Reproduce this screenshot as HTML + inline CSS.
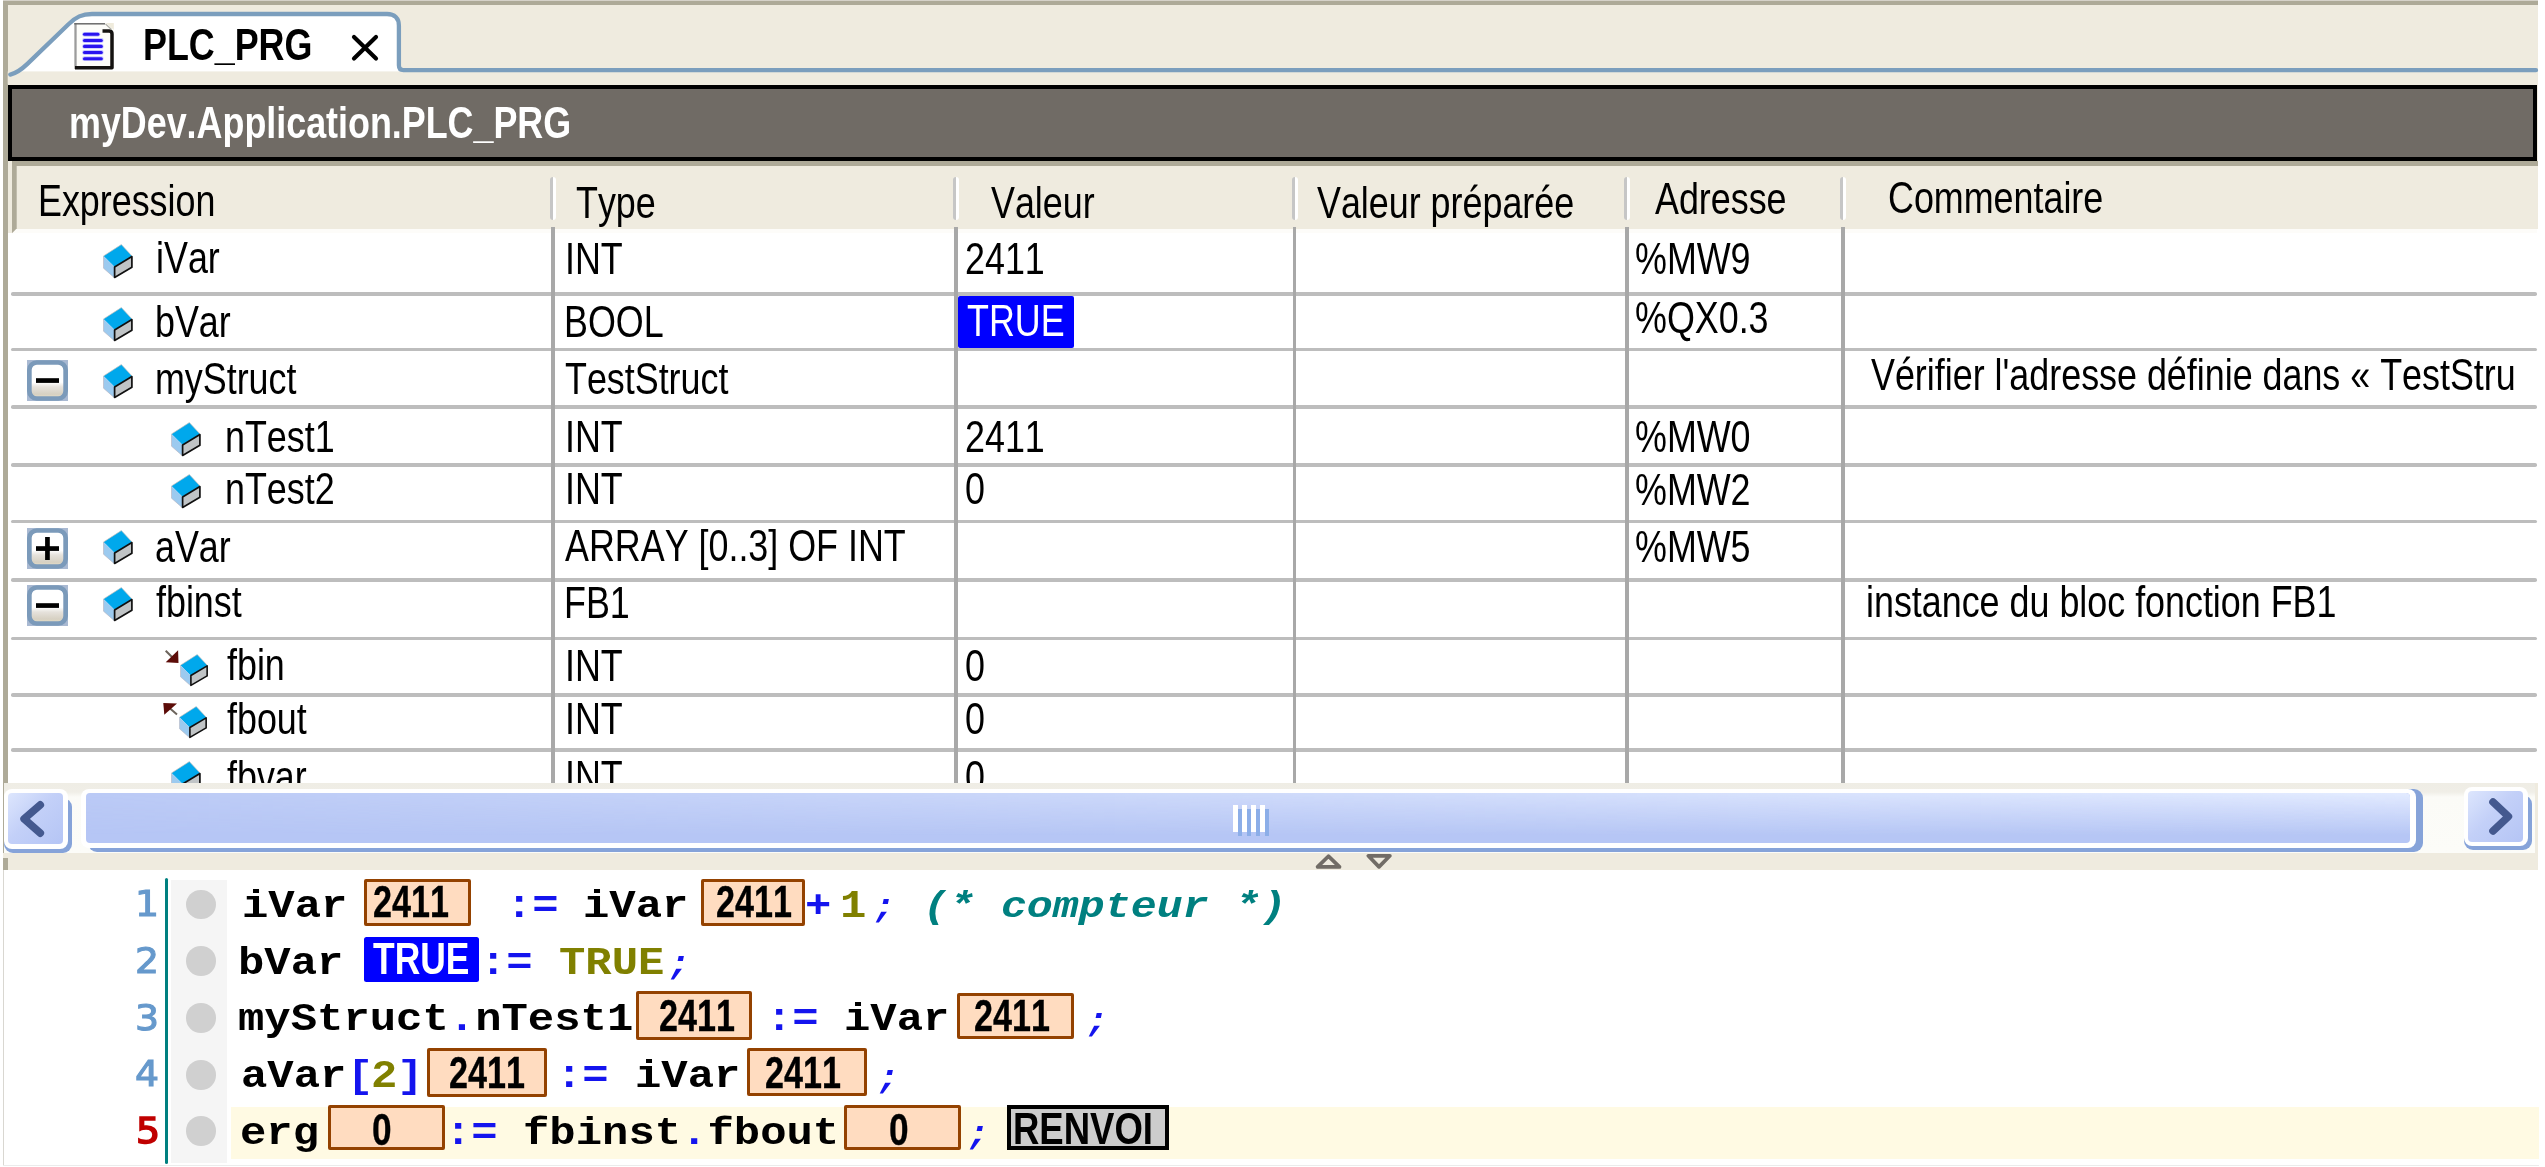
<!DOCTYPE html><html><head><meta charset="utf-8"><title>PLC_PRG</title><style>
*{box-sizing:border-box;margin:0;padding:0}
html,body{width:2545px;height:1167px;overflow:hidden;background:#fff}
body{position:relative;font-family:"Liberation Sans",sans-serif;color:#000}
.a{position:absolute}
.n{position:absolute;font-kerning:none;font-size:44px;line-height:44px;white-space:nowrap;transform:scaleX(.815);transform-origin:0 0}
.b{font-weight:bold}
.c{position:absolute;font-family:"Liberation Mono",monospace;font-weight:bold;font-size:43.4px;line-height:44px;white-space:pre;transform:scale(1.012,.88);transform-origin:0 0}
.hl{position:absolute;left:10.5px;width:2526px;height:3.7px;background:#bdbdbd;border-radius:1.8px}
.vl{position:absolute;top:227px;height:556px;width:3.5px;background:#a8a8a8}
.hs{position:absolute;top:177px;height:43px;width:6px;border-radius:3px;background:linear-gradient(90deg,#c6c6c6 0,#c6c6c6 45%,#fff 55%,#fff 100%)}
.vb{position:absolute;height:46.5px;border:3.8px solid #944200;background:#ffdcc0;border-radius:2px}
.ln{position:absolute;transform:scaleX(1.05);transform-origin:100% 0;font-family:"DejaVu Sans",sans-serif;font-size:36px;line-height:40px;color:#6699cc;width:60px;text-align:right;left:99px}
.dot{position:absolute;left:186px;width:30px;height:30px;border-radius:50%;background:#d0d0d0}
</style></head><body>
<div class="a" style="left:3px;top:0;width:2534.5px;height:870px;background:#efebdf"></div>
<div class="a" style="left:3px;top:0;width:2534.5px;height:1px;background:#d6d2c9"></div>
<div class="a" style="left:3px;top:1px;width:2534.5px;height:4px;background:#aeaa98"></div>
<div class="a" style="left:3px;top:1px;width:4.7px;height:869px;background:#aeaa98"></div>
<svg class="a" style="left:0;top:0" width="2545" height="90" viewBox="0 0 2545 90">
<path d="M10.3 74.6 C17 73 21 70 27.4 63.9 L68.5 24.2 C76 17 82 14 92 14 L387 14 C394.5 14 398.9 18.5 398.9 25.5 L398.9 65.3 C398.9 68.5 400.5 70.2 403.5 70.2 L404 73 L10 76 Z" fill="#fff" stroke="none"/>
<rect x="7.7" y="71.4" width="2530" height="13" fill="#efebdf"/>
<path d="M2536 70.2 L403.5 70.2 C400.5 70.2 398.9 68.5 398.9 65.3 L398.9 25.5 C398.9 18.5 394.5 14 387 14 L92 14 C82 14 76 17 68.5 24.2 L27.4 63.9 C21 70 17 73 10.3 74.6" fill="none" stroke="#7b9ebd" stroke-width="4.3" stroke-linecap="round" stroke-linejoin="round"/>
</svg>
<svg class="a" style="left:73px;top:22px" width="43" height="49" viewBox="0 0 43 49">
<path d="M1.5 1 L33 1 L40.8 8 L40.8 47.8 L1.5 47.8 Z" fill="#fdfdfa"/>
<path d="M33 1 L40.8 1 L40.8 8 Z" fill="#efebdc"/>
<path d="M2.5 1 L2.5 47" fill="none" stroke="#9c9c9c" stroke-width="2.3"/>
<path d="M1.3 1.8 L32 1.8" fill="none" stroke="#6a6a6a" stroke-width="1.5"/>
<path d="M29.5 8.9 L36 8.9 Q39 8.9 39 12 L39 45.7 L2 45.7" fill="none" stroke="#141210" stroke-width="3.5" stroke-linejoin="round"/>
<path d="M32.5 2 L38.5 7.5" fill="none" stroke="#b0b0a8" stroke-width="1.2"/>
<g stroke="#c6c6ff" stroke-width="4.8" stroke-linecap="round"><path d="M11.5 12.3H24.9"/><path d="M11.5 18.5H28.3"/><path d="M11.5 24.4H28.3"/><path d="M11.5 30.5H28.3"/><path d="M11.5 36.7H28.3"/></g>
<g stroke="#2a14f0" stroke-width="3.1" stroke-linecap="round"><path d="M11.5 12.3H24.9"/><path d="M11.5 18.5H28.3"/><path d="M11.5 24.4H28.3"/><path d="M11.5 30.5H28.3"/><path d="M11.5 36.7H28.3"/></g>
</svg>
<span class="n b" style="left:142.9px;top:23.3px;">PLC_PRG</span>
<svg class="a" style="left:346px;top:28px" width="40" height="40" viewBox="0 0 40 40"><path d="M8 9 L30 30.5 M30 9 L8 30.5" stroke="#000" stroke-width="4.2" stroke-linecap="round" fill="none"/></svg>
<div class="a" style="left:8px;top:85px;width:2528.5px;height:76px;background:#706b65;border:4.2px solid #000"></div>
<div class="a" style="left:12px;top:161px;width:2525.5px;height:5px;background:#aeaa98"></div>
<span class="n b" style="left:69.2px;top:100.6px;color:#fff;">myDev.Application.PLC_PRG</span>
<div class="a" style="left:7.7px;top:229.3px;width:2537.3px;height:553.7px;background:#fff"></div>
<div class="a" style="left:7.7px;top:229.3px;width:2529.8px;height:3.5px;background:#fdfcf9"></div>
<div class="a" style="left:3px;top:229.3px;width:4.7px;height:553.7px;background:#aeaa98"></div>
<div class="a" style="left:7.7px;top:229px;width:4.4px;height:4.3px;background:#efebdf"></div>
<svg class="a" style="left:12px;top:161px" width="6" height="74" viewBox="0 0 6 74"><path d="M0 0 L4.7 0 L4.7 67.5 L0 72.2 Z" fill="#aeaa98"/></svg>
<div class="hl" style="top:292.1px"></div>
<div class="hl" style="top:347.7px"></div>
<div class="hl" style="top:405.2px"></div>
<div class="hl" style="top:463.2px"></div>
<div class="hl" style="top:519.8px"></div>
<div class="hl" style="top:578.2px"></div>
<div class="hl" style="top:636.6px"></div>
<div class="hl" style="top:693px"></div>
<div class="hl" style="top:748.1px"></div>
<div class="vl" style="left:551.2px"></div>
<div class="hs" style="left:549.8px"></div>
<div class="vl" style="left:954.1px"></div>
<div class="hs" style="left:952.7px"></div>
<div class="vl" style="left:1292.9px"></div>
<div class="hs" style="left:1291.5px"></div>
<div class="vl" style="left:1625.1px"></div>
<div class="hs" style="left:1623.7px"></div>
<div class="vl" style="left:1841.3px"></div>
<div class="hs" style="left:1839.9px"></div>
<span class="n " style="left:37.9px;top:179.1px;">Expression</span>
<span class="n " style="left:575.7px;top:181.2px;">Type</span>
<span class="n " style="left:990.8px;top:181.2px;">Valeur</span>
<span class="n " style="left:1317.1px;top:180.7px;">Valeur préparée</span>
<span class="n " style="left:1654.9px;top:177.3px;">Adresse</span>
<span class="n " style="left:1888.4px;top:175.9px;">Commentaire</span>
<svg class="a" style="left:103px;top:243.7px" width="31" height="37" viewBox="0 0 31 37"><path d="M0.5 12 L18.35 0.6 L29.3 12.3 L11.4 22.8 Z" fill="#00a8ec"/><path d="M0.5 12 L11.4 22.8 L11.4 33.8 L0.5 24.2 Z" fill="#9ccaef"/><path d="M0.5 12 L18.35 0.6 L29.3 12.3" fill="none" stroke="#cdbfb8" stroke-width="0.9" opacity=".75"/><path d="M0.5 12 L0.5 24.2 L11.4 33.8" fill="none" stroke="#b8b8c4" stroke-width="0.9" opacity=".75"/><path d="M11.6 22.9 L28.9 12.6 L28.9 23.3 L11.6 33.4 Z" fill="#c0c4c6" stroke="#101010" stroke-width="1.7" stroke-linejoin="round"/></svg>
<span class="n " style="left:155.5px;top:236.2px;">iVar</span>
<svg class="a" style="left:103px;top:306.5px" width="31" height="37" viewBox="0 0 31 37"><path d="M0.5 12 L18.35 0.6 L29.3 12.3 L11.4 22.8 Z" fill="#00a8ec"/><path d="M0.5 12 L11.4 22.8 L11.4 33.8 L0.5 24.2 Z" fill="#9ccaef"/><path d="M0.5 12 L18.35 0.6 L29.3 12.3" fill="none" stroke="#cdbfb8" stroke-width="0.9" opacity=".75"/><path d="M0.5 12 L0.5 24.2 L11.4 33.8" fill="none" stroke="#b8b8c4" stroke-width="0.9" opacity=".75"/><path d="M11.6 22.9 L28.9 12.6 L28.9 23.3 L11.6 33.4 Z" fill="#c0c4c6" stroke="#101010" stroke-width="1.7" stroke-linejoin="round"/></svg>
<span class="n " style="left:155.1px;top:299.5px;">bVar</span>
<svg class="a" style="left:103px;top:363.5px" width="31" height="37" viewBox="0 0 31 37"><path d="M0.5 12 L18.35 0.6 L29.3 12.3 L11.4 22.8 Z" fill="#00a8ec"/><path d="M0.5 12 L11.4 22.8 L11.4 33.8 L0.5 24.2 Z" fill="#9ccaef"/><path d="M0.5 12 L18.35 0.6 L29.3 12.3" fill="none" stroke="#cdbfb8" stroke-width="0.9" opacity=".75"/><path d="M0.5 12 L0.5 24.2 L11.4 33.8" fill="none" stroke="#b8b8c4" stroke-width="0.9" opacity=".75"/><path d="M11.6 22.9 L28.9 12.6 L28.9 23.3 L11.6 33.4 Z" fill="#c0c4c6" stroke="#101010" stroke-width="1.7" stroke-linejoin="round"/></svg>
<span class="n " style="left:155.1px;top:357.1px;">myStruct</span>
<svg class="a" style="left:171px;top:421.8px" width="31" height="37" viewBox="0 0 31 37"><path d="M0.5 12 L18.35 0.6 L29.3 12.3 L11.4 22.8 Z" fill="#00a8ec"/><path d="M0.5 12 L11.4 22.8 L11.4 33.8 L0.5 24.2 Z" fill="#9ccaef"/><path d="M0.5 12 L18.35 0.6 L29.3 12.3" fill="none" stroke="#cdbfb8" stroke-width="0.9" opacity=".75"/><path d="M0.5 12 L0.5 24.2 L11.4 33.8" fill="none" stroke="#b8b8c4" stroke-width="0.9" opacity=".75"/><path d="M11.6 22.9 L28.9 12.6 L28.9 23.3 L11.6 33.4 Z" fill="#c0c4c6" stroke="#101010" stroke-width="1.7" stroke-linejoin="round"/></svg>
<span class="n " style="left:225.1px;top:414.5px;">nTest1</span>
<svg class="a" style="left:171px;top:474px" width="31" height="37" viewBox="0 0 31 37"><path d="M0.5 12 L18.35 0.6 L29.3 12.3 L11.4 22.8 Z" fill="#00a8ec"/><path d="M0.5 12 L11.4 22.8 L11.4 33.8 L0.5 24.2 Z" fill="#9ccaef"/><path d="M0.5 12 L18.35 0.6 L29.3 12.3" fill="none" stroke="#cdbfb8" stroke-width="0.9" opacity=".75"/><path d="M0.5 12 L0.5 24.2 L11.4 33.8" fill="none" stroke="#b8b8c4" stroke-width="0.9" opacity=".75"/><path d="M11.6 22.9 L28.9 12.6 L28.9 23.3 L11.6 33.4 Z" fill="#c0c4c6" stroke="#101010" stroke-width="1.7" stroke-linejoin="round"/></svg>
<span class="n " style="left:225.1px;top:467.2px;">nTest2</span>
<svg class="a" style="left:103px;top:529.5px" width="31" height="37" viewBox="0 0 31 37"><path d="M0.5 12 L18.35 0.6 L29.3 12.3 L11.4 22.8 Z" fill="#00a8ec"/><path d="M0.5 12 L11.4 22.8 L11.4 33.8 L0.5 24.2 Z" fill="#9ccaef"/><path d="M0.5 12 L18.35 0.6 L29.3 12.3" fill="none" stroke="#cdbfb8" stroke-width="0.9" opacity=".75"/><path d="M0.5 12 L0.5 24.2 L11.4 33.8" fill="none" stroke="#b8b8c4" stroke-width="0.9" opacity=".75"/><path d="M11.6 22.9 L28.9 12.6 L28.9 23.3 L11.6 33.4 Z" fill="#c0c4c6" stroke="#101010" stroke-width="1.7" stroke-linejoin="round"/></svg>
<span class="n " style="left:155.2px;top:524.7px;">aVar</span>
<svg class="a" style="left:103px;top:587px" width="31" height="37" viewBox="0 0 31 37"><path d="M0.5 12 L18.35 0.6 L29.3 12.3 L11.4 22.8 Z" fill="#00a8ec"/><path d="M0.5 12 L11.4 22.8 L11.4 33.8 L0.5 24.2 Z" fill="#9ccaef"/><path d="M0.5 12 L18.35 0.6 L29.3 12.3" fill="none" stroke="#cdbfb8" stroke-width="0.9" opacity=".75"/><path d="M0.5 12 L0.5 24.2 L11.4 33.8" fill="none" stroke="#b8b8c4" stroke-width="0.9" opacity=".75"/><path d="M11.6 22.9 L28.9 12.6 L28.9 23.3 L11.6 33.4 Z" fill="#c0c4c6" stroke="#101010" stroke-width="1.7" stroke-linejoin="round"/></svg>
<span class="n " style="left:156.0px;top:580.4px;">fbinst</span>
<svg class="a" style="left:179.6px;top:653.6px" width="29.14" height="34.78" viewBox="0 0 31 37"><path d="M0.5 12 L18.35 0.6 L29.3 12.3 L11.4 22.8 Z" fill="#00a8ec"/><path d="M0.5 12 L11.4 22.8 L11.4 33.8 L0.5 24.2 Z" fill="#9ccaef"/><path d="M0.5 12 L18.35 0.6 L29.3 12.3" fill="none" stroke="#cdbfb8" stroke-width="0.9" opacity=".75"/><path d="M0.5 12 L0.5 24.2 L11.4 33.8" fill="none" stroke="#b8b8c4" stroke-width="0.9" opacity=".75"/><path d="M11.6 22.9 L28.9 12.6 L28.9 23.3 L11.6 33.4 Z" fill="#c0c4c6" stroke="#101010" stroke-width="1.7" stroke-linejoin="round"/></svg>
<span class="n " style="left:226.9px;top:643.4px;">fbin</span>
<svg class="a" style="left:179.3px;top:706.2px" width="29.14" height="34.78" viewBox="0 0 31 37"><path d="M0.5 12 L18.35 0.6 L29.3 12.3 L11.4 22.8 Z" fill="#00a8ec"/><path d="M0.5 12 L11.4 22.8 L11.4 33.8 L0.5 24.2 Z" fill="#9ccaef"/><path d="M0.5 12 L18.35 0.6 L29.3 12.3" fill="none" stroke="#cdbfb8" stroke-width="0.9" opacity=".75"/><path d="M0.5 12 L0.5 24.2 L11.4 33.8" fill="none" stroke="#b8b8c4" stroke-width="0.9" opacity=".75"/><path d="M11.6 22.9 L28.9 12.6 L28.9 23.3 L11.6 33.4 Z" fill="#c0c4c6" stroke="#101010" stroke-width="1.7" stroke-linejoin="round"/></svg>
<span class="n " style="left:226.9px;top:696.8px;">fbout</span>
<svg class="a" style="left:170.8px;top:761.4px" width="31" height="37" viewBox="0 0 31 37"><path d="M0.5 12 L18.35 0.6 L29.3 12.3 L11.4 22.8 Z" fill="#00a8ec"/><path d="M0.5 12 L11.4 22.8 L11.4 33.8 L0.5 24.2 Z" fill="#9ccaef"/><path d="M0.5 12 L18.35 0.6 L29.3 12.3" fill="none" stroke="#cdbfb8" stroke-width="0.9" opacity=".75"/><path d="M0.5 12 L0.5 24.2 L11.4 33.8" fill="none" stroke="#b8b8c4" stroke-width="0.9" opacity=".75"/><path d="M11.6 22.9 L28.9 12.6 L28.9 23.3 L11.6 33.4 Z" fill="#c0c4c6" stroke="#101010" stroke-width="1.7" stroke-linejoin="round"/></svg>
<span class="n " style="left:226.9px;top:755.4px;">fbvar</span>
<svg class="a" style="left:27px;top:360px" width="41" height="41" viewBox="0 0 41 41"><defs><linearGradient id="g360" x1="0" y1="0" x2="0" y2="1"><stop offset="0" stop-color="#fff"/><stop offset=".55" stop-color="#fff"/><stop offset=".68" stop-color="#e6e2dc"/><stop offset=".88" stop-color="#d6d0c2"/><stop offset="1" stop-color="#ece4c8"/></linearGradient></defs><rect x="0" y="0" width="41" height="41" fill="#a9b9d2"/><rect x="2.35" y="2.5" width="36.3" height="36" rx="7.5" ry="7.5" fill="url(#g360)" stroke="#7b9aba" stroke-width="4.7"/><rect x="9" y="18.2" width="23" height="4.7" fill="#000"/></svg>
<svg class="a" style="left:27px;top:528.2px" width="41" height="41" viewBox="0 0 41 41"><defs><linearGradient id="g528" x1="0" y1="0" x2="0" y2="1"><stop offset="0" stop-color="#fff"/><stop offset=".55" stop-color="#fff"/><stop offset=".68" stop-color="#e6e2dc"/><stop offset=".88" stop-color="#d6d0c2"/><stop offset="1" stop-color="#ece4c8"/></linearGradient></defs><rect x="0" y="0" width="41" height="41" fill="#a9b9d2"/><rect x="2.35" y="2.5" width="36.3" height="36" rx="7.5" ry="7.5" fill="url(#g528)" stroke="#7b9aba" stroke-width="4.7"/><rect x="9" y="18.2" width="23" height="4.7" fill="#000"/><rect x="18.1" y="9" width="4.7" height="23" fill="#000"/></svg>
<svg class="a" style="left:27px;top:585px" width="41" height="41" viewBox="0 0 41 41"><defs><linearGradient id="g585" x1="0" y1="0" x2="0" y2="1"><stop offset="0" stop-color="#fff"/><stop offset=".55" stop-color="#fff"/><stop offset=".68" stop-color="#e6e2dc"/><stop offset=".88" stop-color="#d6d0c2"/><stop offset="1" stop-color="#ece4c8"/></linearGradient></defs><rect x="0" y="0" width="41" height="41" fill="#a9b9d2"/><rect x="2.35" y="2.5" width="36.3" height="36" rx="7.5" ry="7.5" fill="url(#g585)" stroke="#7b9aba" stroke-width="4.7"/><rect x="9" y="18.2" width="23" height="4.7" fill="#000"/></svg>
<svg class="a" style="left:164px;top:649px" width="16" height="16" viewBox="0 0 16 16"><path d="M1.7 1.7 L8 8" stroke="#6c645c" stroke-width="2"/><path d="M14.1 1.3 L14.5 14.1 L1.7 13.2 Z" fill="#5c0c08"/></svg>
<svg class="a" style="left:162px;top:701px" width="16" height="16" viewBox="0 0 16 16"><path d="M7.5 7 L15 13.4" stroke="#6c645c" stroke-width="2"/><path d="M1.3 2 L15 2.4 L2.3 13.7 Z" fill="#5c0c08"/></svg>
<span class="n " style="left:565.2px;top:236.5px;">INT</span>
<span class="n " style="left:564.3px;top:299.5px;">BOOL</span>
<span class="n " style="left:565.4px;top:356.5px;">TestStruct</span>
<span class="n " style="left:565.2px;top:414.5px;">INT</span>
<span class="n " style="left:565.2px;top:467.1px;">INT</span>
<span class="n " style="left:565.2px;top:524.0px;">ARRAY [0..3] OF INT</span>
<span class="n " style="left:564.2px;top:580.5px;">FB1</span>
<span class="n " style="left:564.7px;top:643.8px;">INT</span>
<span class="n " style="left:564.7px;top:696.7px;">INT</span>
<span class="n " style="left:564.7px;top:755.3px;">INT</span>
<div class="a" style="left:957.5px;top:295.7px;width:116.7px;height:52.3px;background:#0000ff;border-radius:2px"></div>
<span class="n " style="left:965.2px;top:236.5px;">2411</span>
<span class="n " style="left:966.5px;top:298.9px;color:#fff;">TRUE</span>
<span class="n " style="left:965.2px;top:414.5px;">2411</span>
<span class="n " style="left:965.4px;top:467.1px;">0</span>
<span class="n " style="left:965.4px;top:643.8px;">0</span>
<span class="n " style="left:965.4px;top:696.7px;">0</span>
<span class="n " style="left:965.4px;top:755.3px;">0</span>
<span class="n " style="left:1635.2px;top:236.7px;">%MW9</span>
<span class="n " style="left:1635.2px;top:296.0px;">%QX0.3</span>
<span class="n " style="left:1635.2px;top:414.7px;">%MW0</span>
<span class="n " style="left:1635.2px;top:467.7px;">%MW2</span>
<span class="n " style="left:1635.2px;top:524.8px;">%MW5</span>
<span class="n " style="left:1871.0px;top:353.0px;">Vérifier l'adresse définie dans « TestStru</span>
<span class="n " style="left:1866.0px;top:580.3px;">instance du bloc fonction FB1</span>
<div class="a" style="left:3.5px;top:783px;width:2531.5px;height:70px;background:linear-gradient(180deg,#efede5 0,#f0eee7 9px,#fbfbf7 14px,#fcfcf8 100%)"></div>
<div class="a" style="left:88px;top:789px;width:2334.8px;height:62.7px;background:#86a3d9;border-radius:9px"></div>
<div class="a" style="left:80.5px;top:788.7px;width:2335.2px;height:59px;background:#fff;border-radius:8px"></div>
<div class="a" style="left:85.6px;top:793.2px;width:2324.8px;height:49.8px;border-radius:4px;background:#b6c6f5"></div>
<div class="a" style="left:85.6px;top:793.2px;width:2324.8px;height:49.8px;border-radius:4px;background:linear-gradient(180deg,#e3ebff 0,rgba(227,235,255,0) 85%);-webkit-mask-image:linear-gradient(90deg,rgba(0,0,0,.12) 0,rgba(0,0,0,.55) 50%,#000 100%);mask-image:linear-gradient(90deg,rgba(0,0,0,.12) 0,rgba(0,0,0,.55) 50%,#000 100%)"></div>
<div class="a" style="left:1237.6px;top:809px;width:4.5px;height:27px;background:#8caee8"></div>
<div class="a" style="left:1246.65px;top:809px;width:4.5px;height:27px;background:#8caee8"></div>
<div class="a" style="left:1255.7px;top:809px;width:4.5px;height:27px;background:#8caee8"></div>
<div class="a" style="left:1264.75px;top:809px;width:4.5px;height:27px;background:#8caee8"></div>
<div class="a" style="left:1233.1px;top:804.5px;width:4.5px;height:27px;background:#fff"></div>
<div class="a" style="left:1242.15px;top:804.5px;width:4.5px;height:27px;background:#fff"></div>
<div class="a" style="left:1251.2px;top:804.5px;width:4.5px;height:27px;background:#fff"></div>
<div class="a" style="left:1260.25px;top:804.5px;width:4.5px;height:27px;background:#fff"></div>
<div class="a" style="left:3.9px;top:798px;width:67.8px;height:55.2px;background:#86a3d9;border-radius:9px"></div>
<div class="a" style="left:3.9px;top:789.1px;width:64px;height:60px;background:#fff;border-radius:8px"></div>
<div class="a" style="left:8.3px;top:793.3px;width:55px;height:51px;border-radius:4px;background:linear-gradient(135deg,#dde6fd 0,#c3d0f8 45%,#b5c5f5 100%)"></div>
<svg class="a" style="left:3.9px;top:789.1px" width="64" height="60" viewBox="0 0 64 60"><path d="M36.3 15.9 L20.1 29.9 L36.3 44.1" fill="none" stroke="#44598f" stroke-width="7.6" stroke-linejoin="round" stroke-linecap="round"/></svg>
<div class="a" style="left:2464px;top:794.8px;width:67.8px;height:55.7px;background:#86a3d9;border-radius:9px"></div>
<div class="a" style="left:2464px;top:786.6px;width:64px;height:59.8px;background:#fff;border-radius:8px"></div>
<div class="a" style="left:2468.4px;top:790.8px;width:55px;height:50.8px;border-radius:4px;background:linear-gradient(135deg,#dde6fd 0,#c3d0f8 45%,#b5c5f5 100%)"></div>
<svg class="a" style="left:2464px;top:786.6px" width="64" height="59.8" viewBox="0 0 64 59.8"><path d="M29 15 L44.4 29.5 L29 44" fill="none" stroke="#44598f" stroke-width="7.6" stroke-linejoin="round" stroke-linecap="round"/></svg>
<svg class="a" style="left:1310px;top:850px" width="90" height="22" viewBox="0 0 90 22"><g fill="none" stroke="#716c66" stroke-width="3.7" stroke-linejoin="round"><path d="M18.4 6.2 L7.6 16.9 L29.5 16.9 Z"/><path d="M58.3 5.8 L79.9 5.8 L69 16.9 Z"/></g></svg>
<div class="a" style="left:0;top:870px;width:2545px;height:297px;background:#fff"></div>
<div class="a" style="left:231px;top:1106.7px;width:2308px;height:52px;background:#fffae3"></div>
<div class="a" style="left:170.7px;top:880.2px;width:56.6px;height:282.6px;background:#f5f5f5"></div>
<div class="a" style="left:164.9px;top:877.5px;width:3.4px;height:286.5px;background:#008080;border-radius:1.5px"></div>
<div class="dot" style="top:889.6px;left:186.2px;width:29.6px;height:29.6px"></div>
<div class="dot" style="top:946.3px;left:186.2px;width:29.6px;height:29.6px"></div>
<div class="dot" style="top:1003.3px;left:186.2px;width:29.6px;height:29.6px"></div>
<div class="dot" style="top:1060px;left:186.2px;width:29.6px;height:29.6px"></div>
<div class="dot" style="top:1116px;left:186.2px;width:29.6px;height:29.6px"></div>
<span class="ln" style="top:883.8px;color:#6699cc;-webkit-text-stroke:1.1px #6699cc">1</span>
<span class="ln" style="top:940.8px;color:#6699cc;-webkit-text-stroke:1.1px #6699cc">2</span>
<span class="ln" style="top:997.6px;color:#6699cc;-webkit-text-stroke:1.1px #6699cc">3</span>
<span class="ln" style="top:1054.2px;color:#6699cc;-webkit-text-stroke:1.1px #6699cc">4</span>
<span class="ln" style="top:1111.1px;color:#c00000;left:100px;-webkit-text-stroke:1.6px #c00000">5</span>
<div class="a" style="left:3px;top:853px;width:4.7px;height:4.5px;background:#efebdf"></div>
<div class="a" style="left:3px;top:870px;width:1px;height:296px;background:#d9d7d1"></div>
<div class="a" style="left:3px;top:1165.4px;width:2536px;height:1px;background:#ebebeb"></div>
<span class="c" style="left:242.4px;top:887.6px;color:#000;">iVar</span>
<div class="vb" style="left:363.6px;top:879.4px;width:107.8px;height:46.9px"></div>
<span class="n b" style="left:373.2px;top:880.3px;-webkit-text-stroke:.35px #000;transform:scaleX(0.775);">2411</span>
<span class="c" style="left:505.5px;top:887.6px;color:#1414ee;">:=</span>
<span class="c" style="left:583.4px;top:887.6px;color:#000;">iVar</span>
<div class="vb" style="left:701.3px;top:879.2px;width:103.8px;height:47.2px"></div>
<span class="n b" style="left:715.6px;top:880.3px;-webkit-text-stroke:.35px #000;transform:scaleX(0.775);">2411</span>
<span class="c" style="left:804.9px;top:887.6px;color:#1414ee;">+</span>
<span class="c" style="left:840.1px;top:887.6px;color:#808000;">1</span>
<span class="c" style="left:872.7px;top:892.1px;color:#1414ee;font-style:italic;transform:scale(0.860,0.748);">;</span>
<span class="c" style="left:923.3px;top:888.1px;color:#008080;font-style:italic;transform:scale(0.997,0.867);">(* compteur *)</span>
<span class="c" style="left:237.7px;top:944.6px;color:#000;">bVar</span>
<div class="a" style="left:364.4px;top:937px;width:114.3px;height:44.8px;background:#0000ff;border-radius:2.5px"></div>
<span class="n b" style="left:373.0px;top:937.2px;color:#fff;transform:scaleX(0.805);">TRUE</span>
<span class="c" style="left:480.0px;top:944.6px;color:#1414ee;">:=</span>
<span class="c" style="left:558.8px;top:944.6px;color:#808000;">TRUE</span>
<span class="c" style="left:667.9px;top:949.1px;color:#1414ee;font-style:italic;transform:scale(0.860,0.748);">;</span>
<span class="c" style="left:237.8px;top:1001.4px;color:#000;">myStruct<span style="color:#1414ee">.</span>nTest1</span>
<div class="vb" style="left:635.7px;top:991.4px;width:116.3px;height:48.5px"></div>
<span class="n b" style="left:658.8px;top:994.0px;-webkit-text-stroke:.35px #000;transform:scaleX(0.775);">2411</span>
<span class="c" style="left:765.8px;top:1001.4px;color:#1414ee;">:=</span>
<span class="c" style="left:843.9px;top:1001.4px;color:#000;">iVar</span>
<div class="vb" style="left:956.9px;top:993.4px;width:116.9px;height:45.5px"></div>
<span class="n b" style="left:974.1px;top:994.0px;-webkit-text-stroke:.35px #000;transform:scaleX(0.775);">2411</span>
<span class="c" style="left:1086.0px;top:1005.9px;color:#1414ee;font-style:italic;transform:scale(0.860,0.748);">;</span>
<span class="c" style="left:240.8px;top:1058.0px;color:#000;">aVar</span>
<span class="c" style="left:347.2px;top:1058.0px;color:#1414ee;">[</span>
<span class="c" style="left:371.4px;top:1058.0px;color:#808000;">2</span>
<span class="c" style="left:397.1px;top:1058.0px;color:#1414ee;">]</span>
<div class="vb" style="left:427.1px;top:1048.4px;width:120.2px;height:48.4px"></div>
<span class="n b" style="left:449.4px;top:1050.6px;-webkit-text-stroke:.35px #000;transform:scaleX(0.775);">2411</span>
<span class="c" style="left:555.6px;top:1058.0px;color:#1414ee;">:=</span>
<span class="c" style="left:634.7px;top:1058.0px;color:#000;">iVar</span>
<div class="vb" style="left:747.1px;top:1048.4px;width:120.1px;height:47.5px"></div>
<span class="n b" style="left:764.9px;top:1050.6px;-webkit-text-stroke:.35px #000;transform:scaleX(0.775);">2411</span>
<span class="c" style="left:877.1px;top:1062.5px;color:#1414ee;font-style:italic;transform:scale(0.860,0.748);">;</span>
<span class="c" style="left:240.2px;top:1114.9px;color:#000;">erg</span>
<div class="vb" style="left:328.2px;top:1104.8px;width:116.5px;height:45.7px"></div>
<span class="n b" style="left:371.8px;top:1107.5px;-webkit-text-stroke:.35px #000;transform:scaleX(0.8);">0</span>
<span class="c" style="left:444.6px;top:1114.9px;color:#1414ee;">:=</span>
<span class="c" style="left:522.7px;top:1114.9px;color:#000;">fbinst<span style="color:#1414ee">.</span>fbout</span>
<div class="vb" style="left:844.0px;top:1104.8px;width:116.9px;height:45.7px"></div>
<span class="n b" style="left:889.1px;top:1107.5px;-webkit-text-stroke:.35px #000;transform:scaleX(0.8);">0</span>
<span class="c" style="left:967.1px;top:1119.4px;color:#1414ee;font-style:italic;transform:scale(0.860,0.748);">;</span>
<div class="a" style="left:1006.6px;top:1104.8px;width:162.4px;height:45.7px;background:#ccc;border:4px solid #000"></div>
<span class="n b" style="left:1013.4px;top:1107.3px;transform:scaleX(0.83);">RENVOI</span>
</body></html>
